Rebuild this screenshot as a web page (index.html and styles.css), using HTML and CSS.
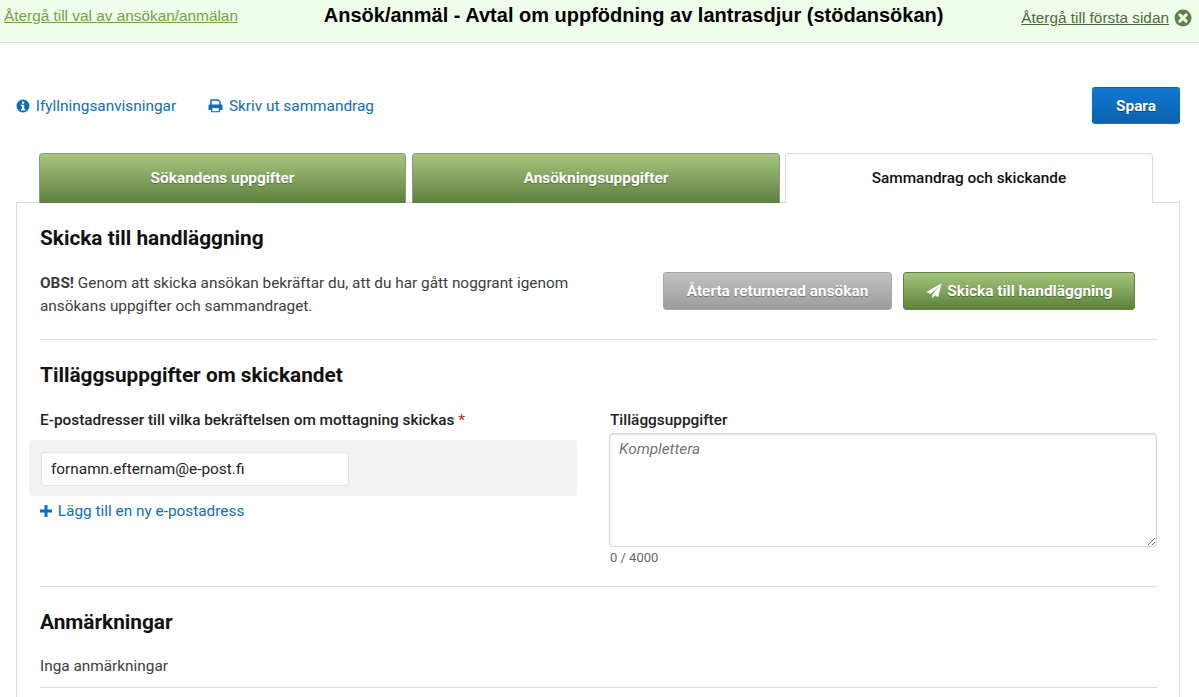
FILE: index.html
```html
<!DOCTYPE html>
<html>
<head>
  <title>Ansök/anmäl - Avtal om uppfödning av lantrasdjur</title>
  <link rel="stylesheet" href="styles.css">
</head>
<body>

  <header class="top-bar">
    <a class="back-link" href="#">Återgå till val av ansökan/anmälan</a>
    <h1>Ansök/anmäl - Avtal om uppfödning av lantrasdjur (stödansökan)</h1>
    <div class="exit">
      <a class="exit-link" href="#">Återgå till första sidan</a>
      <svg class="exit-icon" viewBox="0 0 18 18" width="18" height="18">
        <circle cx="9" cy="9" r="8.5" fill="#5f7f4d"/>
        <path d="M5.9 5.9l6.2 6.2M12.1 5.9l-6.2 6.2" stroke="#f1fdeb" stroke-width="3" stroke-linecap="round"/>
      </svg>
    </div>
  </header>

  <main class="page">
    <div class="toolbar">
      <div class="tool-links">
        <a href="#">
          <svg viewBox="0 0 14 14" width="14" height="14">
            <circle cx="7" cy="7" r="6.5" fill="#0f6cbd"/>
            <rect x="5.9" y="2.5" width="2.3" height="2.2" fill="#fff"/>
            <path d="M4.9 5.8h3.3v4.3h1v1.3H4.9v-1.3h1V7.1h-1z" fill="#fff"/>
          </svg>
          Ifyllningsanvisningar
        </a>
        <a href="#">
          <svg viewBox="0 0 15 14" width="15" height="14">
            <path d="M3 6V1h7l2 2v3" fill="none" stroke="#0f6cbd" stroke-width="1.5"/>
            <path d="M1.5 5.5h12q1 0 1 1v4.5h-2.5v2.3H3V11H.5V6.5q0-1 1-1z" fill="#0f6cbd"/>
            <rect x="4.2" y="9.2" width="6.6" height="3" fill="#fff"/>
          </svg>
          Skriv ut sammandrag
        </a>
      </div>
      <button class="btn btn-blue">Spara</button>
    </div>

    <nav class="tabs">
      <a class="tab" href="#">Sökandens uppgifter</a>
      <a class="tab tab-wide" href="#">Ansökningsuppgifter</a>
      <a class="tab tab-wide tab-active" href="#">Sammandrag och skickande</a>
    </nav>

    <section class="panel">
      <h2>Skicka till handläggning</h2>
      <div class="send-row">
        <p class="send-note"><strong>OBS!</strong> Genom att skicka ansökan bekräftar du, att du har gått noggrant igenom ansökans uppgifter och sammandraget.</p>
        <div class="send-actions">
          <button class="btn btn-grey">Återta returnerad ansökan</button>
          <button class="btn btn-green">
            <svg viewBox="0 0 16 16" width="16" height="16">
              <path d="M15.6.2L.4 9l4.3 1.7L13 3.5 6.3 11.6v4l2.6-3.1 3.3 1.4z" fill="#fff"/>
            </svg>
            Skicka till handläggning
          </button>
        </div>
      </div>

      <hr class="hr-send">

      <h2>Tilläggsuppgifter om skickandet</h2>
      <div class="form-cols">
        <div class="form-col">
          <label class="field-label">E-postadresser till vilka bekräftelsen om mottagning skickas <span class="req">*</span></label>
          <div class="email-box">
            <input class="email-input" type="text" value="fornamn.efternam@e-post.fi">
          </div>
          <a class="add-link" href="#">
            <svg viewBox="0 0 12 12" width="12" height="12">
              <path d="M4.5 0h3v4.5H12v3H7.5V12h-3V7.5H0v-3h4.5z" fill="#0f6cbd"/>
            </svg>
            Lägg till en ny e-postadress
          </a>
        </div>
        <div class="form-col">
          <label class="field-label label-tight">Tilläggsuppgifter</label>
          <textarea class="extra-text" placeholder="Komplettera"></textarea>
          <div class="counter">0 / 4000</div>
        </div>
      </div>

      <hr class="hr-notes">

      <h2>Anmärkningar</h2>
      <p class="notes">Inga anmärkningar</p>

      <hr class="hr-end">
    </section>
  </main>

</body>
</html>
```

FILE: styles.css
```css
html {
  overflow: hidden;
}

body {
  margin: 0;
  font-family: Roboto, "Liberation Sans", sans-serif;
  font-size: 15.36px;
  color: #3d3d3d;
  background: #fff;
}

a {
  color: #0f6cbd;
  text-decoration: none;
}

.top-bar {
  height: 42px;
  display: flex;
  justify-content: space-between;
  align-items: flex-start;
  padding: 0 7px 0 4px;
  background: #f1fdeb;
  border-bottom: 1px solid #d8e2d8;
  font-family: "Liberation Sans", Arial, sans-serif;
}

.top-bar h1 {
  margin: 4px 0 0 8px;
  font-size: 20px;
  line-height: 22px;
  font-weight: bold;
  color: #000;
}

.back-link {
  margin-top: 7px;
  font-size: 15.36px;
  line-height: 18px;
  color: #6fa53c;
  text-decoration: underline;
}

.exit {
  display: flex;
  align-items: center;
  gap: 5px;
  margin-top: 9px;
}

.exit-link {
  font-size: 15.36px;
  line-height: 18px;
  color: #4d6a3d;
  text-decoration: underline;
}

.exit-icon {
  display: block;
}

.page {
  padding: 44px 19px 0 16px;
}

.toolbar {
  display: flex;
  justify-content: space-between;
  align-items: center;
  height: 37px;
}

.tool-links {
  display: flex;
  gap: 32px;
}

.tool-links svg {
  vertical-align: -2px;
  margin-right: 2px;
}

.btn {
  border: 1px solid transparent;
  border-radius: 3px;
  font-family: Roboto, "Liberation Sans", sans-serif;
  font-size: 15.36px;
  font-weight: 700;
  color: #fff;
  padding: 0;
  text-shadow: 0 1px 1px rgba(0, 0, 0, 0.35);
}

.btn-blue {
  width: 88px;
  height: 37px;
  background: linear-gradient(#0f78d1, #0b62ae);
}

.btn-grey {
  width: 229px;
  height: 38px;
  background: linear-gradient(#c2c2c2, #9c9c9c);
  border-color: #a8a8a8;
}

.btn-green {
  width: 232px;
  height: 38px;
  background: linear-gradient(#a5c57c, #5b8339);
  border-color: #5f8440;
}

.btn-green svg {
  vertical-align: -3px;
  margin-right: 2px;
}

.tabs {
  display: flex;
  gap: 6px;
  margin: 29px 0 -1px 23px;
  position: relative;
}

.tab {
  width: 367px;
  height: 50px;
  box-sizing: border-box;
  padding-bottom: 2px;
  display: flex;
  align-items: center;
  justify-content: center;
  border: 1px solid #8a9a80;
  border-bottom: 0;
  border-radius: 4px 4px 0 0;
  background: linear-gradient(#a8c680, #5d7f3d);
  color: #fff;
  font-weight: 700;
  text-shadow: 0 1px 1px rgba(0, 0, 0, 0.3);
}

.tab-wide {
  width: 368px;
}

.tab-active {
  margin-left: -1px;
  background: #fff;
  border-color: #dcdcdc;
  color: #111;
  font-weight: 500;
  text-shadow: none;
}

.panel {
  border: 1px solid #dcdcdc;
  padding: 23px 22px 40px 23px;
}

.panel h2 {
  margin: 0;
  font-size: 20.8px;
  line-height: 24px;
  font-weight: 700;
  color: #111;
}

.send-row {
  display: flex;
  justify-content: space-between;
  margin-top: 22px;
}

.send-note {
  margin: 0;
  width: 560px;
  line-height: 23px;
}

.send-actions {
  display: flex;
  gap: 11px;
  margin: 0 22px 0 0;
}

.panel hr {
  border: 0;
  border-top: 1px solid #dcdcdc;
}

.panel .hr-send {
  margin: 21px 0 23px;
}

.form-cols {
  display: grid;
  grid-template-columns: 537px 548px;
  column-gap: 32px;
  margin-top: 23px;
}

.field-label {
  display: block;
  line-height: 20px;
  font-weight: 500;
  color: #222;
}

.label-tight {
  margin-bottom: 3px;
  padding-left: 1px;
}

.req {
  color: #b33a3a;
}

.email-box {
  margin: 10px 0 0 -11px;
  padding: 12px;
  height: 56px;
  box-sizing: border-box;
  background: #f2f2f2;
  border-radius: 4px;
}

.email-input {
  display: block;
  width: 308px;
  height: 34px;
  box-sizing: border-box;
  padding: 0 9px;
  border: 1px solid #e2e2e2;
  border-radius: 4px;
  font-family: inherit;
  font-size: 15.36px;
  color: #222;
}

.add-link {
  display: block;
  margin-top: 6px;
  line-height: 18px;
}

.add-link svg {
  vertical-align: -1px;
  margin-right: 2px;
}

.extra-text {
  display: block;
  width: 548px;
  height: 114px;
  box-sizing: border-box;
  padding: 6px 9px;
  border: 1px solid #d6d6d6;
  border-radius: 4px;
  box-shadow: inset 0 1px 2px #e4e4e4;
  font-family: inherit;
  font-size: 15.36px;
}

.extra-text::placeholder {
  color: #757575;
  font-style: italic;
}

.counter {
  margin-top: 3px;
  padding-left: 1px;
  font-size: 13px;
  line-height: 16px;
  color: #666;
}

.panel .hr-notes {
  margin: 20px 0 23px;
}

.notes {
  margin: 22px 0 0;
  line-height: 20px;
}

.panel .hr-end {
  margin: 11px 0 0;
}
```
